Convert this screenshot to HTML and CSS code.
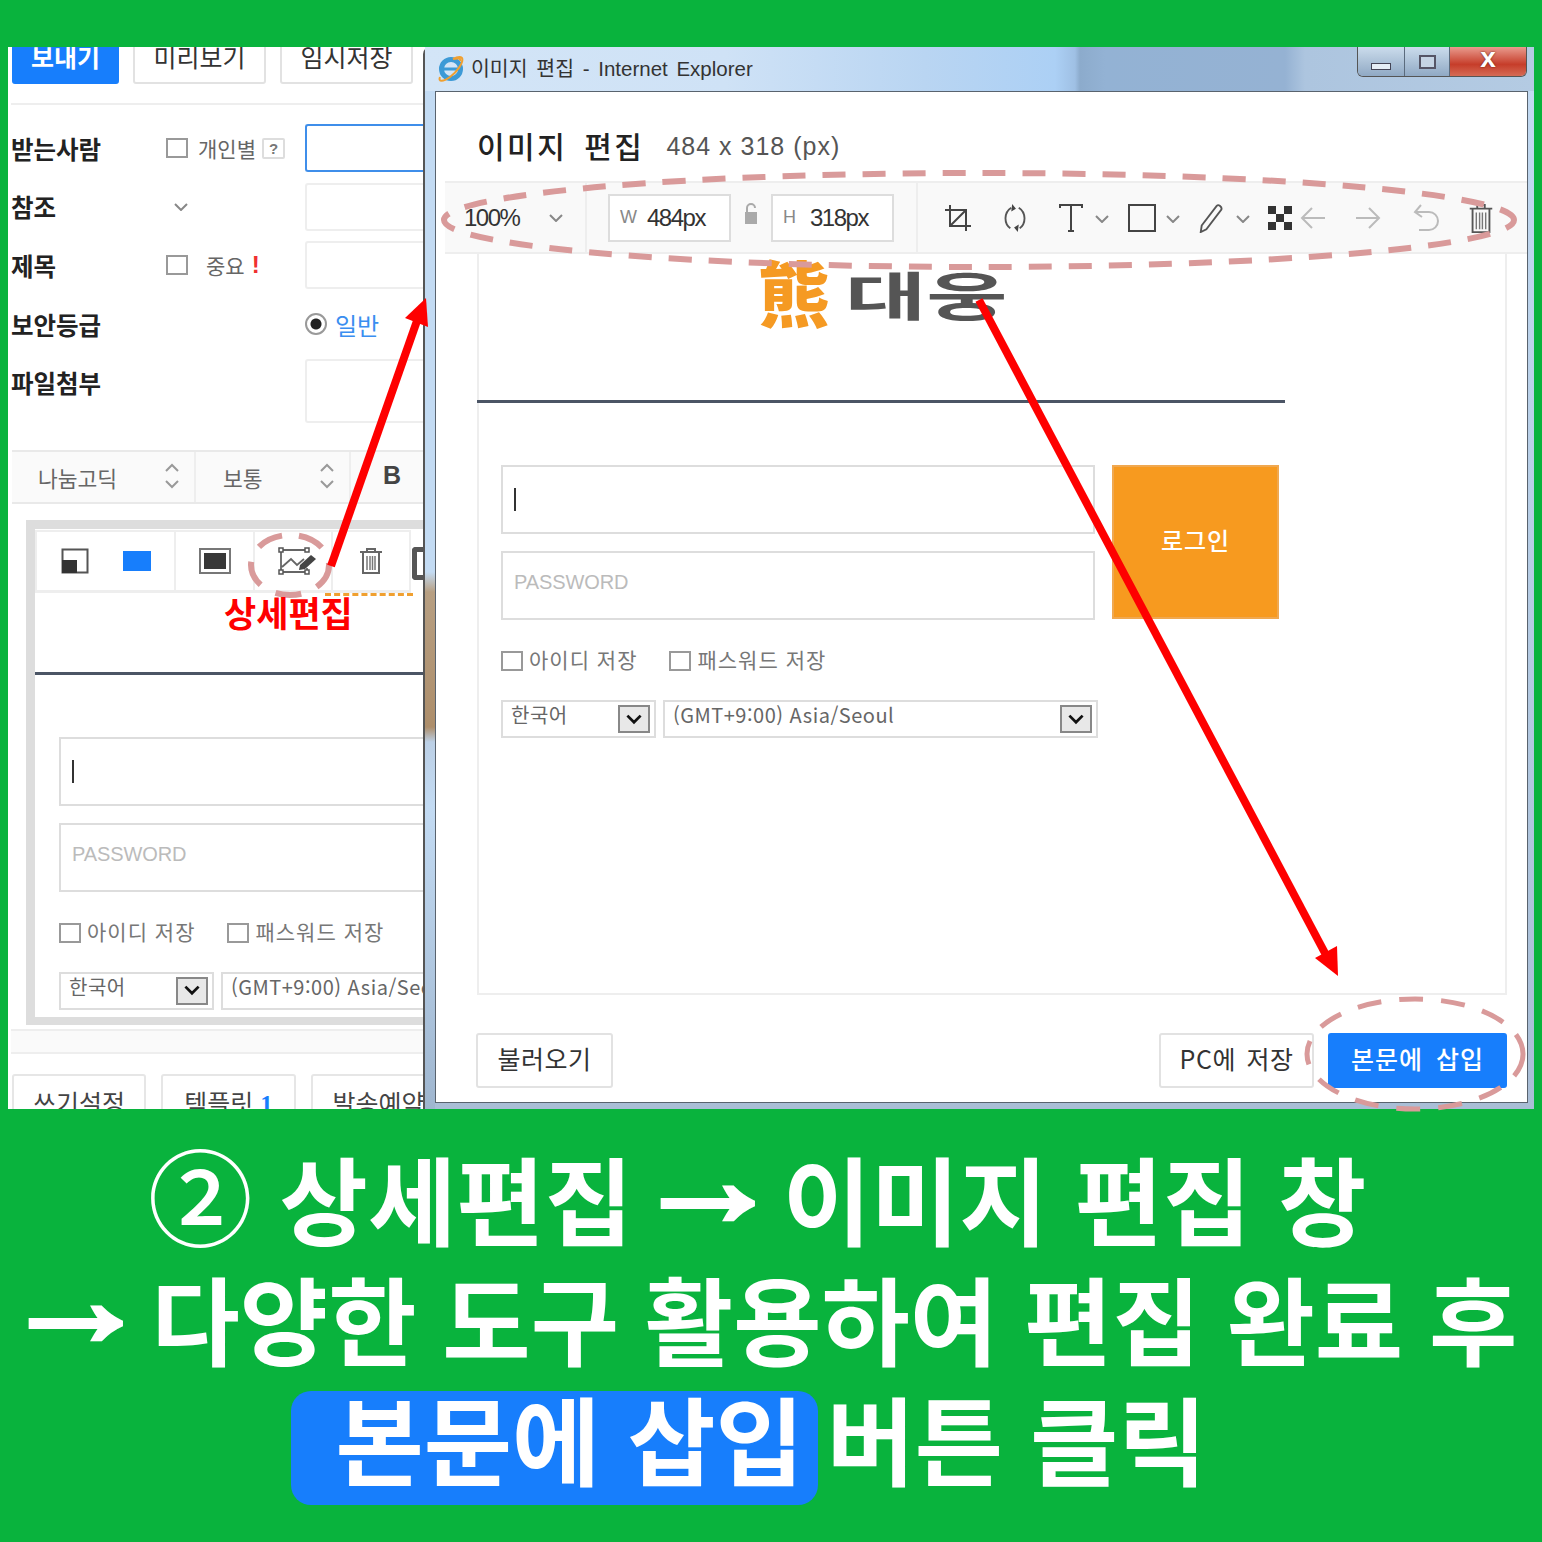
FILE: index.html
```html
<!DOCTYPE html>
<html lang="ko">
<head>
<meta charset="utf-8">
<title>이미지 편집</title>
<link rel="stylesheet" href="styles.css">
</head>
<body>
<div class="page">
  <div class="stage">
    <section class="panel">
      <div class="actions">
        <button class="btn btn-primary act">보내기</button>
        <button class="btn act">미리보기</button>
        <button class="btn act">임시저장</button>
      </div>
      <div class="rule"></div>
      <div class="fields">
        <div class="label">받는사람</div>
        <div class="opt"><span class="check"></span><span class="opt-text">개인별</span><span class="help">?</span></div>
        <div class="input input-focus"></div>
        <div class="label">참조</div>
        <div class="opt"><svg class="chev cc-chev" viewBox="0 0 14 8"><path d="M1 1l6 6 6-6"/></svg></div>
        <div class="input"></div>
        <div class="label">제목</div>
        <div class="opt"><span class="check"></span><span class="opt-text opt-wide">중요</span><span class="bang">!</span></div>
        <div class="input"></div>
        <div class="label">보안등급</div>
        <div class="opt"></div>
        <div class="radio-row"><span class="radio"></span><span class="radio-text">일반</span></div>
        <div class="label label-top">파일첨부</div>
        <div class="opt"></div>
        <div class="input input-tall"></div>
      </div>
      <div class="fontbar">
        <div class="fontcell fc-a"><span>나눔고딕</span><svg class="updown" viewBox="0 0 14 26"><path d="M1 8l6-6 6 6M1 18l6 6 6-6"/></svg></div>
        <div class="fontcell fc-b"><span>보통</span><svg class="updown" viewBox="0 0 14 26"><path d="M1 8l6-6 6 6M1 18l6 6 6-6"/></svg></div>
        <div class="bold-b">B</div>
      </div>
      <div class="frame">
        <div class="imgbar">
          <div class="imgcell imgcell-a">
            <svg class="ic28" viewBox="0 0 28 26"><rect x="1.500" y="1.500" width="25" height="23" fill="#fff" stroke="#555" stroke-width="2"/><rect x="1" y="12" width="15" height="13" fill="#333"/></svg>
            <span class="blue-swatch"></span>
          </div>
          <div class="imgcell imgcell-b"><svg class="ic32" viewBox="0 0 32 26"><rect x="1" y="1" width="30" height="24" fill="#fff" stroke="#777" stroke-width="2"/><rect x="5" y="5" width="22" height="16" fill="#383838"/></svg></div>
          <div class="imgcell imgcell-c"><svg class="ic36" viewBox="0 0 40 28"><path d="M3 3h25M3 3v22M3 25h26M29 21v4M4 20l9-8 6 6 7-6" fill="none" stroke="#666" stroke-width="1.800"/><g fill="#fff" stroke="#555" stroke-width="1.500"><rect x="1" y="1" width="4" height="4"/><rect x="27" y="1" width="4" height="4"/><rect x="1" y="23" width="4" height="4"/><rect x="27" y="23" width="4" height="4"/></g><path d="M22 18l11-10 5 4-11 10-6 1z" fill="#444"/></svg></div>
          <div class="imgcell imgcell-d"><svg class="ic26" viewBox="0 0 26 28"><path d="M2 5h22M9 5V2h8v3M5 5v21h16V5" fill="none" stroke="#666" stroke-width="2"/><path d="M9 9v14M12 9v14M14.500 9v14M17 9v14" stroke="#777" stroke-width="1.500"/></svg></div>
        </div>
        <div class="img-edge"></div>
        <div class="imgbar-extra"></div>
        <div class="logo-stub"></div>
        <div class="login">
          <div class="login-fields">
            <div class="field"><span class="caret"></span></div>
            <div class="field field-pw">PASSWORD</div>
          </div>
          <div class="checks">
            <span class="check check-sq"></span><span class="check-label">아이디 저장</span>
            <span class="check check-sq check-2"></span><span class="check-label">패스워드 저장</span>
          </div>
          <div class="selects">
            <div class="select select-lang"><span>한국어</span><span class="sel-btn"><svg viewBox="0 0 14 10"><path d="M1 1.500l6 6 6-6"/></svg></span></div>
            <div class="select select-tz"><span>(GMT+9:00) Asia/Seoul</span></div>
          </div>
        </div>
      </div>
      <div class="strip"></div>
      <div class="tabs">
        <div class="tab tab-1">쓰기설정</div>
        <div class="tab tab-2">템플릿 <b>1</b></div>
        <div class="tab tab-3">발송예약</div>
      </div>
    </section>

    <section class="window">
      <header class="titlebar">
        <svg class="ie" viewBox="0 0 28 28"><circle cx="14" cy="14" r="9.500" fill="none" stroke="#3d9ad6" stroke-width="5"/><path d="M7 14h14" stroke="#3d9ad6" stroke-width="3"/><path d="M3 22C1 27 6 27 13 22S27 7 25 3C23 1 18 3 16 4c5-1 8-1 7 2" fill="none" stroke="#f0a030" stroke-width="2"/></svg>
        <span class="title-text">이미지 편집 - Internet Explorer</span>
        <div class="controls">
          <div class="ctl ctl-min"><span class="ctl-dash"></span></div>
          <div class="ctl ctl-max"><span class="ctl-box"></span></div>
          <div class="ctl ctl-close">x</div>
        </div>
      </header>
      <div class="client">
        <div class="heading"><h1>이미지 편집</h1><span class="dims">484 x 318 (px)</span></div>
        <div class="toolbar">
          <div class="zoomcell"><span class="zoomval">100%</span><svg class="chev" viewBox="0 0 14 8"><path d="M1 1l6 6 6-6"/></svg></div>
          <div class="sizecell">
            <div class="sizebox"><span class="size-key">W</span><span class="size-val">484px</span></div>
            <svg class="lock" viewBox="0 0 14 22"><path d="M3 9V5a4 4 0 0 1 8 0" fill="none" stroke="#aaa" stroke-width="2"/><rect x="1" y="9" width="12" height="12" fill="#aaa"/></svg>
            <div class="sizebox"><span class="size-key">H</span><span class="size-val">318px</span></div>
          </div>
          <div class="tools">
            <svg class="t28" viewBox="0 0 28 28"><path d="M6 1v21h21M1 6h21v21M6 22L22 6" fill="none" stroke="#444" stroke-width="2"/></svg>
            <svg class="t28" viewBox="0 0 28 32"><path d="M10 5C2 10 2 22 9 27M18 5c8 5 8 17 1 22" fill="none" stroke="#555" stroke-width="2"/><path d="M11 1l-1 8 5-3zM17 31l1-8-5 3z" fill="#444"/></svg>
            <svg class="t24" viewBox="0 0 24 30"><path d="M1 5V2h22v3M12 2v26M9 28h6" fill="none" stroke="#444" stroke-width="2"/></svg>
            <svg class="chev tchev" viewBox="0 0 14 8"><path d="M1 1l6 6 6-6"/></svg>
            <svg class="t28" viewBox="0 0 28 28"><rect x="1" y="1" width="26" height="26" fill="none" stroke="#444" stroke-width="2"/></svg>
            <svg class="chev tchev" viewBox="0 0 14 8"><path d="M1 1l6 6 6-6"/></svg>
            <svg class="t28 pencil" viewBox="0 0 28 32"><path d="M3 24L19 3c2-2 6 1 5 4L8 28l-6 3z" fill="none" stroke="#555" stroke-width="2"/></svg>
            <svg class="chev tchev" viewBox="0 0 14 8"><path d="M1 1l6 6 6-6"/></svg>
            <svg class="t24" viewBox="0 0 24 24"><path d="M0 0h8v8H0zM16 0h8v8h-8zM8 8h8v8H8zM0 16h8v8H0zM16 16h8v8h-8z" fill="#333"/></svg>
            <svg class="t26" viewBox="0 0 26 24"><path d="M25 12H2M12 2L2 12l10 10" fill="none" stroke="#bbb" stroke-width="2"/></svg>
            <svg class="t26" viewBox="0 0 26 24"><path d="M1 12h23M14 2l10 10-10 10" fill="none" stroke="#bbb" stroke-width="2"/></svg>
            <svg class="t26" viewBox="0 0 26 28"><path d="M8 1L2 8l7 5M2 8h14a7 7 0 0 1 0 18H6" fill="none" stroke="#bbb" stroke-width="2"/></svg>
            <svg class="t26" viewBox="0 0 26 32"><path d="M1 6h24M9 6V2h8v4M4 6v25h18V6" fill="none" stroke="#555" stroke-width="2"/><path d="M8 10v18M11.500 10v18M14.500 10v18M18 10v18" stroke="#777" stroke-width="1.500"/></svg>
          </div>
        </div>
        <div class="canvas">
          <div class="logo"><span class="logo-mark">熊</span><span class="logo-word">대웅</span></div>
          <div class="login login-wide">
            <div class="login-top">
              <div class="login-fields">
                <div class="field"><span class="caret"></span></div>
                <div class="field field-pw">PASSWORD</div>
              </div>
              <div class="login-btn">로그인</div>
            </div>
            <div class="checks">
              <span class="check check-sq"></span><span class="check-label">아이디 저장</span>
              <span class="check check-sq check-2"></span><span class="check-label">패스워드 저장</span>
            </div>
            <div class="selects">
              <div class="select select-lang"><span>한국어</span><span class="sel-btn"><svg viewBox="0 0 14 10"><path d="M1 1.500l6 6 6-6"/></svg></span></div>
              <div class="select select-tz"><span>(GMT+9:00) Asia/Seoul</span><span class="sel-btn"><svg viewBox="0 0 14 10"><path d="M1 1.500l6 6 6-6"/></svg></span></div>
            </div>
          </div>
        </div>
        <footer class="win-foot">
          <button class="btn foot-btn foot-load">불러오기</button>
          <button class="btn foot-btn foot-save">PC에 저장</button>
          <button class="btn btn-primary foot-btn foot-insert">본문에 삽입</button>
        </footer>
      </div>
    </section>
  </div>

  <div class="caption">
    <p class="line line-1"><span class="num">②</span> 상세편집 <span class="arw">→</span> 이미지 편집 창</p>
    <p class="line line-2"><span class="arw">→</span> 다양한 도구 활용하여 편집 완료 후</p>
    <p class="line line-3"><span class="pill">본문에 삽입</span><span>버튼 클릭</span></p>
  </div>

  <svg class="marks" viewBox="0 0 1542 1542">
    <g class="dash">
      <ellipse class="d-toolbar" cx="979" cy="220" rx="535" ry="47"/>
      <ellipse class="d-edit" cx="290" cy="565" rx="39" ry="30"/>
      <ellipse class="d-insert" cx="1415" cy="1054" rx="108" ry="55"/>
    </g>
    <path class="arrow-line" d="M331 566L418 318"/>
    <path class="arrow-head" d="M426 298L405 318L428 327Z"/>
    <path class="arrow-line" d="M979 300L1326 955"/>
    <path class="arrow-head" d="M1338 976L1315 958L1337 946Z"/>
  </svg>
  <div class="edit-note">상세편집</div>
</div>
</body>
</html>
```
FILE: styles.css
```css
* { box-sizing: border-box; }
html, body { margin: 0; padding: 0; }
body { font-family: "Noto Sans CJK KR", "Noto Sans", sans-serif; background: #09b33d; }
.page { position: relative; width: 1542px; height: 1542px; background: #09b33d; overflow: hidden; }
.stage { display: flex; width: 1526px; height: 1062px; margin: 0 8px; position: relative; top: 47px; overflow: hidden; background: #fff; }

.panel { width: 415px; flex: none; overflow: hidden; padding-left: 3px; }
.btn { font-family: inherit; background: #fff; border: 2px solid #e2e2e2; border-radius: 3px; color: #333; padding: 0; }
.btn-primary { background: #177efc; border-color: #177efc; color: #fff; font-weight: 700; }
.actions { display: flex; gap: 14px; margin: -19px 0 0 1px; }
.act { width: 133px; height: 56px; font-size: 25px; line-height: 1; }
.act.btn-primary { width: 107px; }
.rule { height: 2px; background: #eee; margin-top: 19px; }

.fields { display: grid; grid-template-columns: 155px 139px 1fr; grid-template-rows: 48px 48px 48px 48px 64px; row-gap: 10.7px; margin-top: 19px; }
.label { font-size: 24.500px; font-weight: 700; color: #222; display: flex; align-items: center; height: 48px; }
.opt { display: flex; align-items: center; }
.check { width: 22px; height: 20px; border: 2px solid #999; background: #fff; flex: none; }
.opt-text { font-size: 21px; color: #666; margin-left: 10px; }
.opt-wide { margin-left: 18px; }
.help { width: 23px; height: 21px; margin-left: 6px; border: 2px solid #ddd; border-radius: 2px; font: 700 15px/17px "Liberation Sans", sans-serif; color: #777; text-align: center; }
.bang { font: 700 24px/1 "Liberation Sans", sans-serif; color: #f03030; margin-left: 7px; }
.input { border: 2px solid #eee; border-radius: 3px 0 0 3px; border-right: 0; height: 48px; }
.input-focus { border-color: #3f8eea; }
.input-tall { height: 64px; }
.cc-chev { margin-left: 8px; }
.chev { width: 14px; height: 8px; fill: none; stroke: #888; stroke-width: 2; flex: none; }
.radio-row { display: flex; align-items: center; gap: 8px; }
.radio { width: 22px; height: 22px; border-radius: 50%; border: 2px solid #999; background: radial-gradient(circle, #222 0 5px, #fff 6px); flex: none; }
.radio-text { font-size: 24px; color: #3a8ef0; }

.fontbar { display: flex; align-items: center; height: 54px; margin-top: 27px; background: #fafafa; border-top: 2px solid #e9e9e9; border-bottom: 2px solid #e9e9e9; margin-left: 1px; }
.fontcell { display: flex; align-items: center; justify-content: space-between; height: 100%; border-right: 2px solid #eee; font-size: 21.500px; color: #666; padding-top: 2px; }
.fc-a { width: 184px; padding: 2px 15px 0 26px; }
.fc-b { width: 155px; padding: 2px 15px 0 27px; }
.updown { width: 14px; height: 26px; fill: none; stroke: #999; stroke-width: 2; margin-top: -4px; }
.bold-b { font: 700 25px/1 "Liberation Sans", sans-serif; color: #444; margin-left: 32px; margin-top: -2px; }

.frame { position: relative; margin: 16px 0 0 15px; width: 560px; height: 505px; border: 9px solid #ddd; border-bottom-width: 8px; background: #fff; }
.imgbar { display: flex; width: 376px; height: 63px; margin-top: 1px; background: #fff; border: 2px solid #eee; border-bottom-width: 3px; }
.imgcell { display: flex; align-items: center; justify-content: center; height: 100%; border-right: 2px solid #eee; }
.imgcell-a { width: 139px; gap: 34px; }
.imgcell-b { width: 79px; }
.imgcell-c { width: 78px; padding-left: 10px; }
.imgcell-d { width: 76px; border-right: 0; }
.ic28 { width: 28px; height: 26px; }
.ic32 { width: 32px; height: 26px; }
.ic36 { width: 40px; height: 28px; }
.ic26 { width: 26px; height: 28px; }
.blue-swatch { width: 28px; height: 20px; background: #177efc; }
.img-edge { width: 88px; height: 3px; margin: 0 0 0 290px; border-top: 3px dashed #f0a030; }
.imgbar-extra { position: absolute; left: 377px; top: 18px; width: 11px; height: 33px; border: 5px solid #555; border-right: 0; border-radius: 4px 0 0 4px; }
.logo-stub { height: 79px; border-bottom: 3px solid #4b5565; }

.login { padding-left: 24px; }
.login-fields { display: flex; flex-direction: column; gap: 17px; width: 594px; flex: none; padding-top: 62px; }
.login-wide .login-fields { padding-top: 0; }
.field { height: 69px; border: 2px solid #ddd; display: flex; align-items: center; padding-left: 11px; font: 20px "Liberation Sans", sans-serif; color: #bbb; letter-spacing: -.1px; width: 594px; }
.field-pw { padding-bottom: 6px; }
.caret { width: 2px; height: 23px; background: #333; }
.login-top { display: flex; gap: 17px; padding-top: 62px; }
.login-btn { width: 167px; height: 154px; background: #f79a1f; border: 2px solid #f0a850; color: #fff; font-size: 24px; display: flex; align-items: center; justify-content: center; font-weight: 500; padding-bottom: 6px; letter-spacing: 1px; }
.checks { display: flex; align-items: center; margin-top: 30px; height: 22px; }
.check-sq { width: 22px; height: 20px; }
.check-label { font-size: 21px; color: #777; margin-left: 6px; letter-spacing: 1px; margin-top: -4px; }
.check-2 { margin-left: 32px; }
.selects { display: flex; gap: 7px; margin-top: 28px; }
.select { display: flex; justify-content: space-between; height: 38px; border: 2px solid #ddd; font-size: 20px; color: #666; padding: 0 4px 0 8px; line-height: 26px; flex: none; letter-spacing: .5px; }
.select-lang { width: 155px; }
.select-tz { width: 435px; }
.sel-btn { width: 32px; height: 28px; margin-top: 3px; background: #e8e8e8; border: 2px solid #888; display: flex; align-items: center; justify-content: center; }
.sel-btn svg { width: 16px; height: 11px; fill: none; stroke: #111; stroke-width: 2.500; }

.strip { height: 25px; margin-top: 4px; background: #fafafa; border-top: 2px solid #eee; border-bottom: 2px solid #eee; }
.tabs { display: flex; gap: 15px; margin-top: 20px; margin-left: 1px; }
.tab { height: 56px; border: 2px solid #e6e6e6; border-radius: 3px; font-size: 25px; color: #444; text-align: center; padding-top: 11px; line-height: 30px; flex: none; }
.tab-1 { width: 134px; }
.tab-2 { width: 135px; }
.tab-3 { width: 135px; }
.tab b { color: #177efc; font-family: "Liberation Serif", serif; }

.window { flex: none; width: 1111px; height: 1062px; display: flex; flex-direction: column; border-left: 2px solid #555; border-top-left-radius: 7px;
  background: linear-gradient(180deg, #c3dbf3 0, #c3dbf3 525px, #b79f82 545px, #ad8e6b 680px, #bcd0e6 695px, #c3dbf3 760px, #9fb6cf 1062px) left / 10px 100% no-repeat, linear-gradient(180deg, #c3dbf3, #a9bed6); }
.titlebar { height: 44px; flex: none; display: flex; align-items: flex-start; padding-left: 12px;
  background: linear-gradient(90deg, #d3e5f7 0, #cfe2f6 300px, #b9d5f2 500px, #acd0f5 630px, #9fc0e4 650px, #8cabcc 655px, #93b2d4 680px, #95b2d3 860px, #adc5df 880px, #b4cbe3 100%); }
.ie { width: 28px; height: 28px; margin-top: 8px; }
.title-text { font-family: "Liberation Sans", "Noto Sans CJK KR", sans-serif; font-size: 20.500px; line-height: 26px; color: #333; margin: 9px 0 0 6px; word-spacing: 3px; }
.controls { display: flex; margin: 0 7px 0 auto; height: 30px; width: 170px; border: 1px solid #555; border-top: 0; border-radius: 0 0 6px 6px; overflow: hidden; }
.ctl { display: flex; align-items: center; justify-content: center; background: linear-gradient(180deg, #cbdcec, #90a9c4); border-right: 1px solid #5b6b7d; }
.ctl-min { width: 47px; }
.ctl-max { width: 45px; }
.ctl-close { flex: 1; border-right: 0; background: linear-gradient(180deg, #e99b8e, #c63d2a 60%, #d56b55); color: #fff; font: 700 28px/1 "Liberation Sans", sans-serif; text-shadow: 0 0 2px #5a1a10; padding-bottom: 7px; }
.ctl-dash { width: 20px; height: 7px; margin-top: 9px; background: #e6eef6; border: 1px solid #445; }
.ctl-box { width: 17px; height: 14px; background: #c5d4e4; border: 2px solid #556; }

.client { flex: 1; margin: 0 6px 6px 10px; background: #fff; border: 1px solid #59636e; padding-left: 41px; display: flex; flex-direction: column; overflow: hidden; }
.heading { height: 89px; flex: none; display: flex; align-items: baseline; gap: 24px; padding-top: 33px; }
.heading h1 { margin: 0; font-size: 30px; font-weight: 500; color: #222; line-height: 40px; letter-spacing: 2.500px; word-spacing: 6px; }
.dims { font-size: 25px; color: #555; font-family: "Liberation Sans", sans-serif; letter-spacing: 1px; position: relative; top: -3px; margin-left: -2px; }
.toolbar { display: flex; align-items: center; flex: none; height: 73px; margin-left: -32px; background: #f9f9f9; border-top: 2px solid #eee; border-bottom: 2px solid #eee; }
.zoomcell { width: 142px; height: 100%; display: flex; align-items: center; justify-content: space-between; padding: 0 22px 0 19px; border-right: 2px solid #eee; }
.zoomval { font: 24px/1 "Liberation Sans", sans-serif; color: #333; letter-spacing: -1.500px; }
.sizecell { display: flex; align-items: center; width: 331px; height: 100%; padding-left: 21px; border-right: 2px solid #eee; }
.sizebox { width: 123px; height: 48px; background: #fff; border: 2px solid #ddd; display: flex; align-items: center; font-family: "Liberation Sans", sans-serif; }
.size-key { font-size: 18px; color: #888; margin-left: 10px; width: 27px; }
.size-val { font-size: 24px; color: #333; letter-spacing: -1.500px; }
.lock { width: 14px; height: 22px; margin: -8px 13px 0; }
.tools { display: grid; grid-template-columns: 57px 58px 36px 33px 38px 32px 38px 32px 32px 55px 58px 55px 26px; align-items: center; margin-left: 26px; }
.t28 { width: 28px; height: 30px; }
.t24 { width: 24px; height: 30px; }
.t26 { width: 26px; height: 30px; }
.tchev { margin-top: 2px; }

.canvas { flex: none; height: 741px; width: 1030px; border: 2px solid #eee; border-top: 0; }
.logo { height: 149px; width: 808px; border-bottom: 3px solid #4b5565; display: flex; align-items: flex-start; padding-left: 281px; margin-left: -2px; }
.logo-mark { font-size: 72px; line-height: 78px; font-weight: 900; color: #f59a23; margin-top: -3px; }
.logo-word { font-size: 52px; line-height: 80px; font-weight: 700; color: #555; margin: 0 0 0 15px; width: 100px; transform: scaleX(1.7); transform-origin: 0 50%; white-space: nowrap; }
.login-wide { padding-left: 22px; }

.win-foot { display: flex; align-items: center; gap: 14px; height: 55px; width: 1031px; margin-top: 38px; margin-left: -1px; flex: none; }
.foot-btn { height: 55px; font-size: 25px; letter-spacing: .5px; word-spacing: 3px; padding-bottom: 5px; }
.foot-load { width: 137px; margin-right: auto; }
.foot-save { width: 155px; }
.foot-insert { width: 179px; font-weight: 500; letter-spacing: 1px; word-spacing: 5px; }

.caption { position: absolute; left: 0; top: 1137px; width: 1542px; color: #fff; font-weight: 700; }
.line { margin: 0; font-size: 96px; line-height: 120px; height: 120px; text-align: center; white-space: nowrap; }
.num { font-size: 105px; font-weight: 500; line-height: 1; }
.arw { display: inline-block; font-family: "Liberation Sans", sans-serif; line-height: 1; transform: translateY(-25px) scale(1.55, 1.35); -webkit-text-stroke: 4px #fff; }
.line-1 { margin-left: -28px; }
.line-2 { margin-left: 3px; word-spacing: -1px; }
.line-2 .arw { margin-right: 2px; }
.line-3 { display: flex; justify-content: center; align-items: center; gap: 8px; margin-left: -44px; }
.pill { display: inline-block; height: 114px; line-height: 92px; width: 527px; margin-top: 22px; background: #177efc; border-radius: 20px; padding-left: 44px; text-align: left; }

.marks { position: absolute; left: 0; top: 0; width: 1542px; height: 1542px; pointer-events: none; }
.dash ellipse { fill: none; stroke: #d99a9a; }
.d-toolbar { stroke-width: 6; stroke-dasharray: 23 17; stroke-dashoffset: 11; }
.d-edit { stroke-width: 6; stroke-dasharray: 26 17; }
.d-insert { stroke-width: 5; stroke-dasharray: 24 18; }
.arrow-line { stroke: #fe0000; stroke-width: 8; fill: none; }
.arrow-head { fill: #fe0000; }
.edit-note { position: absolute; left: 224px; top: 589px; font-size: 35px; line-height: 46px; font-weight: 700; color: #fe0000; }
```
